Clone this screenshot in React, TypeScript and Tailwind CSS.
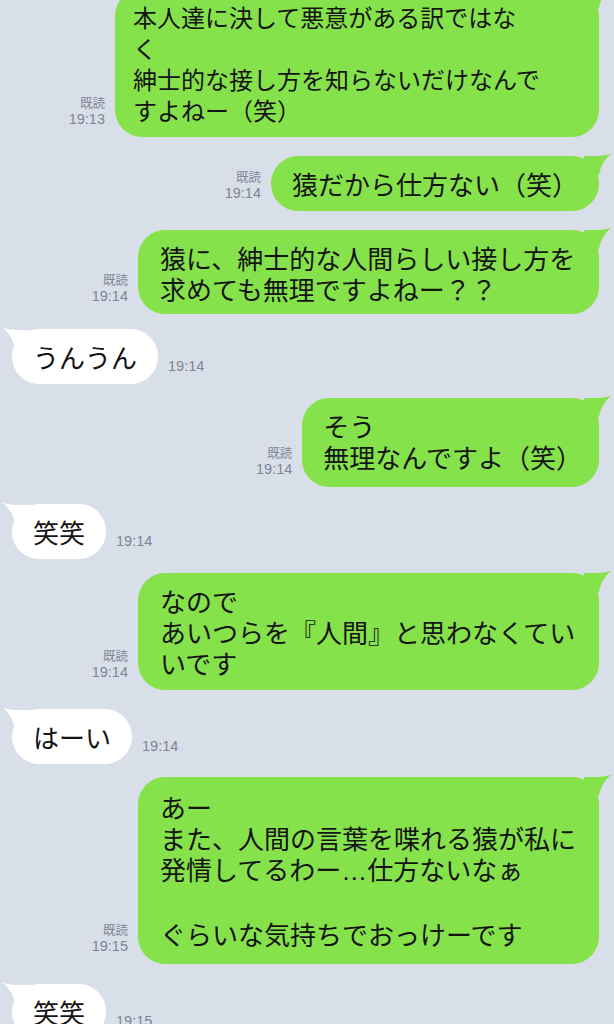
import React from 'react';

type Msg = {
  me: boolean;
  text: React.ReactNode;
  time: string;
  gap: string;
  box?: string;
  size?: string;
};

const msgs: Msg[] = [
  {
    me: true,
    text: '本人達に決して悪意がある訳ではな\nく\n紳士的な接し方を知らないだけなんで\nすよねー（笑）',
    time: '19:13',
    gap: 'mt-[-11px]',
    box: 'w-[484px] pl-[18px] pr-4 py-3',
    size: 'text-[24px]',
  },
  { me: true, text: '猿だから仕方ない（笑）', time: '19:14', gap: 'mt-[19px]' },
  {
    me: true,
    text: '猿に、紳士的な人間らしい接し方を\n求めても無理ですよねー？？',
    time: '19:14',
    gap: 'mt-[19px]',
    box: 'w-[461px] px-[22px] pt-3 pb-[10px]',
  },
  { me: false, text: 'うんうん', time: '19:14', gap: 'mt-[15px]' },
  {
    me: true,
    text: 'そう\n無理なんですよ（笑）',
    time: '19:14',
    gap: 'mt-[14px]',
    box: 'pl-[21px] pr-[17px] pt-3 pb-[15px]',
  },
  { me: false, text: '笑笑', time: '19:14', gap: 'mt-[17px]' },
  {
    me: true,
    text: 'なので\nあいつらを『人間』と思わなくてい\nいです',
    time: '19:14',
    gap: 'mt-[14px]',
    box: 'w-[461px] px-[22px] py-3',
  },
  { me: false, text: 'はーい', time: '19:14', gap: 'mt-[19px]' },
  {
    me: true,
    text: (
      <>
        {'あー\nまた、人間の言葉を喋れる猿が私に\n発情してるわー'}
        <span className="font-['Liberation_Sans',sans-serif]">…</span>
        {'仕方ないなぁ\n\nぐらいな気持ちでおっけーです'}
      </>
    ),
    time: '19:15',
    gap: 'mt-[13px]',
    box: 'w-[461px] px-[22px] pt-[14px] pb-[15px]',
  },
  { me: false, text: '笑笑', time: '19:15', gap: 'mt-[20px]' },
];

function Tail({ me }: { me: boolean }) {
  return (
    <svg
      width="28"
      height="26"
      viewBox="0 0 28 26"
      className={
        me
          ? 'absolute top-[-3px] right-[-13px]'
          : 'absolute top-[-2px] left-[-10px] -scale-x-100'
      }
    >
      <path
        d="M0 3 L10 3 C17 3 23 2.5 27 0.5 C23 5 17 10 15 22 L0 22 Z"
        fill={me ? '#86e24a' : '#ffffff'}
      />
    </svg>
  );
}

function Row({ m }: { m: Msg }) {
  const bubble = (
    <div
      className={`relative rounded-[27px] leading-[31px] text-[#141414] whitespace-pre ${
        m.me ? 'bg-[#86e24a]' : 'bg-white'
      } ${m.box ?? 'px-[21px] py-3'} ${m.size ?? 'text-[26px]'}`}
    >
      <Tail me={m.me} />
      <span className="relative">{m.text}</span>
    </div>
  );

  if (m.me) {
    return (
      <div className={`flex justify-end items-end pr-[15px] ${m.gap}`}>
        <div className="flex flex-col items-end mr-[10px] mb-[9px] text-[#7c8595]">
          <span className="text-[12.5px] leading-[17px]">既読</span>
          <span className="text-[14.5px] leading-[17px] font-['Liberation_Sans',sans-serif]">
            {m.time}
          </span>
        </div>
        {bubble}
      </div>
    );
  }

  return (
    <div className={`flex items-end pl-[12px] ${m.gap}`}>
      {bubble}
      <span className="ml-[10px] mb-[9px] text-[14.5px] leading-[17px] text-[#7c8595] font-['Liberation_Sans',sans-serif]">
        {m.time}
      </span>
    </div>
  );
}

export default function App() {
  return (
    <div className="w-[614px] h-[1024px] overflow-hidden bg-[#d9dfe8] font-['Noto_Sans_CJK_JP',sans-serif]">
      {msgs.map((m, i) => (
        <Row key={i} m={m} />
      ))}
    </div>
  );
}
